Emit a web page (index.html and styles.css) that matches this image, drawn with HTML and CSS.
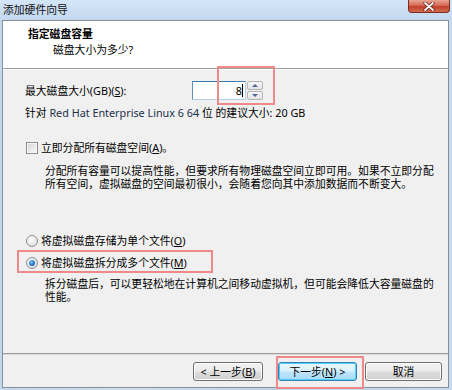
FILE: index.html
```html
<!DOCTYPE html>
<html lang="zh-CN">
<head>
<meta charset="utf-8">
<title>添加硬件向导</title>
<link rel="stylesheet" href="styles.css">
</head>
<body>
<div class="window">
  <div class="titlebar">
    <span class="title">添加硬件向导</span>
    <div class="close">
      <svg width="14" height="9" viewBox="0 0 14 9"><path d="M3 1 L11 8 M11 1 L3 8" stroke="#5a1a12" stroke-width="3.2" stroke-linecap="round"/><path d="M3 1 L11 8 M11 1 L3 8" stroke="#ffffff" stroke-width="1.8" stroke-linecap="round"/></svg>
    </div>
  </div>
  <div class="frame">
    <div class="header">
      <div class="h-title">指定磁盘容量</div>
      <div class="h-sub">磁盘大小为多少?</div>
    </div>
    <div class="content">
      <div class="size-row">
        <span class="size-label">最大磁盘大小(GB)(<u>S</u>):</span>
        <div class="spin-wrap">
          <div class="input"><span class="val">8</span><span class="caret"></span></div>
          <div class="spinner">
            <div class="spin-btn"><span class="tri-up"></span></div>
            <div class="spin-btn"><span class="tri-down"></span></div>
          </div>
          <div class="mark mark-size"></div>
        </div>
      </div>
      <div class="hint">针对 <span class="os">Red Hat Enterprise Linux 6 64</span> 位 的建议大小: 20 GB</div>
      <div class="check-row"><span class="checkbox"></span><span>立即分配所有磁盘空间(<u>A</u>)。</span></div>
      <p class="desc desc-alloc">分配所有容量可以提高性能，但要求所有物理磁盘空间立即可用。如果不立即分配<br>所有空间，虚拟磁盘的空间最初很小，会随着您向其中添加数据而不断变大。</p>
      <div class="radio-row r1"><span class="radio"></span><span>将虚拟磁盘存储为单个文件(<u>O</u>)</span></div>
      <div class="radio-row r2"><span class="radio on"></span><span>将虚拟磁盘拆分成多个文件(<u>M</u>)</span><div class="mark mark-radio"></div></div>
      <p class="desc desc-split">拆分磁盘后，可以更轻松地在计算机之间移动虚拟机，但可能会降低大容量磁盘的<br>性能。</p>
    </div>
    <div class="footer">
      <button class="btn btn-back">&lt; 上一步(<u>B</u>)</button>
      <div class="next-wrap">
        <button class="btn btn-next">下一步(<u>N</u>) &gt;</button>
        <div class="mark mark-next"></div>
      </div>
      <button class="btn btn-cancel">取消</button>
    </div>
  </div>
</div>
</body>
</html>
```
FILE: styles.css
```css
* { box-sizing: border-box; }

html, body {
  margin: 0;
  padding: 0;
}

body {
  width: 452px;
  height: 390px;
  overflow: hidden;
  font-family: "Noto Sans", "Noto Sans CJK SC", sans-serif;
  font-size: 10.8px;
  line-height: 13px;
  color: #000;
  background: linear-gradient(90deg, #c2d8ef 0%, #cfe0f3 30%, #bcd3ec 60%, #c6dbf1 100%);
}

.window {
  width: 452px;
  height: 390px;
  display: flex;
  flex-direction: column;
}

.titlebar {
  height: 20px;
  display: flex;
  justify-content: space-between;
  align-items: flex-start;
  background: linear-gradient(180deg, #d4e5f7 0%, #c3d8ef 100%);
}

.title {
  padding: 3px 0 0 3px;
  color: #111;
}

.close {
  width: 42px;
  height: 13px;
  margin-right: 2px;
  border: 1px solid #7d2a20;
  border-top: none;
  border-radius: 0 0 4px 4px;
  background: linear-gradient(180deg, #e8a493 0%, #d56a55 45%, #c2402b 55%, #d06a4f 100%);
  display: flex;
  align-items: center;
  justify-content: center;
}

.frame {
  height: 368px;
  margin: 0 3px 0 2px;
  border: 1px solid #8a8f96;
  background: #f0f0f0;
  display: flex;
  flex-direction: column;
}

.header {
  height: 48px;
  background: #fff;
  border-bottom: 1px solid #a0a0a0;
  padding: 6px 0 0 25px;
}

.h-title {
  font-weight: bold;
}

.h-sub {
  margin-top: 3px;
  padding-left: 25px;
}

.content {
  flex: 1;
  border-top: 1px solid #fff;
  padding: 11px 0 0 22px;
  display: flex;
  flex-direction: column;
}

.size-row {
  display: flex;
  align-items: center;
  height: 19px;
}

.size-label {
  width: 167px;
}

.spin-wrap {
  position: relative;
  display: flex;
  gap: 1px;
  height: 19px;
}

.input {
  width: 54px;
  height: 19px;
  background: #fff;
  border: 1px solid #b7cfe6;
  border-top-color: #3d7bad;
  border-left-color: #5b93c6;
  display: flex;
  justify-content: flex-end;
  align-items: center;
  padding-right: 2px;
}

.val {
  color: #000;
}

.caret {
  width: 1px;
  height: 13px;
  background: #000;
  margin-left: 0;
}

.spinner {
  width: 16px;
  height: 19px;
  display: flex;
  flex-direction: column;
  gap: 1px;
}

.spin-btn {
  flex: 1;
  border: 1px solid #b4b4b4;
  border-radius: 2px;
  background: linear-gradient(180deg, #f6f6f6 0%, #e4e4e4 100%);
  display: flex;
  align-items: center;
  justify-content: center;
}

.tri-up, .tri-down {
  width: 0;
  height: 0;
  border-left: 3px solid transparent;
  border-right: 3px solid transparent;
}

.tri-up { border-bottom: 3px solid #4e6a96; }
.tri-down { border-top: 3px solid #4e6a96; }

.mark {
  position: absolute;
  border: 2px solid #f08a8a;
  pointer-events: none;
}

.mark-size {
  left: 25px;
  top: -15px;
  width: 58px;
  height: 39px;
}

.hint {
  margin-top: 6px;
}

.os { color: #1b2f4a; }

.check-row {
  margin-top: 22px;
  display: flex;
  align-items: center;
  gap: 3px;
}

.checkbox {
  width: 12px;
  height: 12px;
  margin-left: 1px;
  border: 1px solid #8e8f8f;
  background: linear-gradient(135deg, #d2d2d2 0%, #ececec 60%, #fafafa 100%);
  box-shadow: inset 0 0 0 1px #f4f4f4;
}

.desc {
  margin: 0;
  padding-left: 20px;
}

.desc-alloc { margin-top: 10px; }

.radio-row {
  position: relative;
  display: flex;
  align-items: center;
  gap: 3px;
  height: 13px;
}

.r1 { margin-top: 44px; }
.r2 { margin-top: 9px; }

.radio {
  width: 12px;
  height: 12px;
  margin-left: 1px;
  border-radius: 50%;
  border: 1px solid #8e8f8f;
  background: radial-gradient(circle at 40% 35%, #ffffff 0%, #e6e6e6 60%, #cfcfcf 100%);
  display: flex;
  align-items: center;
  justify-content: center;
}

.radio.on::after {
  content: "";
  width: 6px;
  height: 6px;
  border-radius: 50%;
  background: radial-gradient(circle at 40% 35%, #8fd0ff 0%, #2a7fd0 45%, #124f8f 100%);
}

.mark-radio {
  left: -8px;
  top: -6px;
  width: 196px;
  height: 23px;
}

.desc-split { margin-top: 8px; }

.footer {
  height: 34px;
  border-top: 1px solid #a0a0a0;
  box-shadow: inset 0 1px 0 #d8d8d8;
  display: flex;
  justify-content: flex-end;
  align-items: flex-start;
  padding: 8px 6px 0 0;
}

.btn {
  height: 19px;
  font: inherit;
  color: #000;
  padding: 0;
  border: 1px solid #707070;
  border-radius: 3px;
  background: linear-gradient(180deg, #f2f2f2 0%, #ebebeb 48%, #dddddd 52%, #cfcfcf 100%);
  box-shadow: inset 0 0 0 1px #fcfcfc;
}

.btn-back { width: 70px; }

.next-wrap {
  position: relative;
  margin-left: 15px;
  margin-right: 8px;
}

.btn-next {
  width: 79px;
  border-color: #3c7fb1;
  background: linear-gradient(180deg, #eaf6fd 0%, #d9f0fc 48%, #bee6fd 52%, #a7d9f5 100%);
  box-shadow: inset 0 0 0 1px #48d1fb;
}

.mark-next {
  left: -2px;
  top: -6px;
  width: 88px;
  height: 33px;
}

.btn-cancel { width: 77px; }
```
